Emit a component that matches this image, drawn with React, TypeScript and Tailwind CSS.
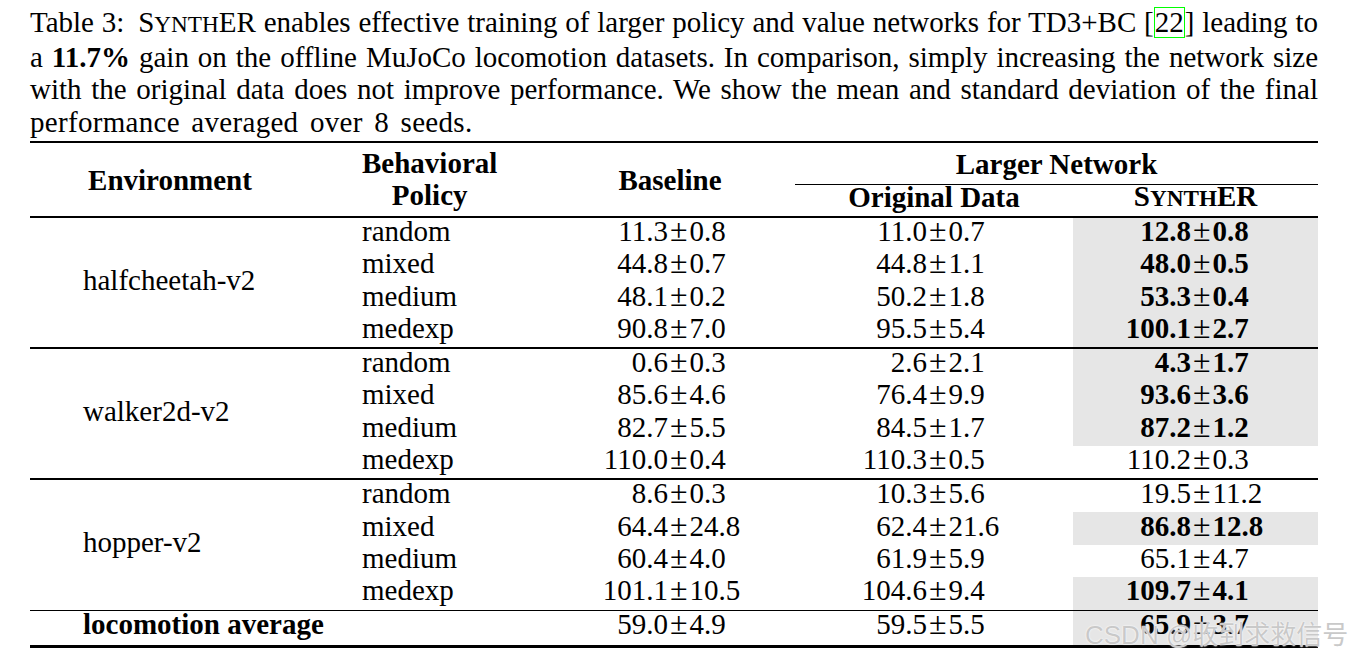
import React from 'react';

type Row = [string, string, string, string, string, string, string, boolean];

const groups: { env: string; rows: Row[] }[] = [
  {
    env: 'halfcheetah-v2',
    rows: [
      ['random', '11.3', '0.8', '11.0', '0.7', '12.8', '0.8', true],
      ['mixed', '44.8', '0.7', '44.8', '1.1', '48.0', '0.5', true],
      ['medium', '48.1', '0.2', '50.2', '1.8', '53.3', '0.4', true],
      ['medexp', '90.8', '7.0', '95.5', '5.4', '100.1', '2.7', true],
    ],
  },
  {
    env: 'walker2d-v2',
    rows: [
      ['random', '0.6', '0.3', '2.6', '2.1', '4.3', '1.7', true],
      ['mixed', '85.6', '4.6', '76.4', '9.9', '93.6', '3.6', true],
      ['medium', '82.7', '5.5', '84.5', '1.7', '87.2', '1.2', true],
      ['medexp', '110.0', '0.4', '110.3', '0.5', '110.2', '0.3', false],
    ],
  },
  {
    env: 'hopper-v2',
    rows: [
      ['random', '8.6', '0.3', '10.3', '5.6', '19.5', '11.2', false],
      ['mixed', '64.4', '24.8', '62.4', '21.6', '86.8', '12.8', true],
      ['medium', '60.4', '4.0', '61.9', '5.9', '65.1', '4.7', false],
      ['medexp', '101.1', '10.5', '104.6', '9.4', '109.7', '4.1', true],
    ],
  },
];

const cols = 'grid grid-cols-[280px_235px_250px_278px_245px]';

const Num = ({ m, s, w, bold }: { m: string; s: string; w: string; bold?: boolean }) => (
  <div className={`flex ${bold ? 'font-bold' : ''}`}>
    <span className={`${w} text-right`}>{m}</span>
    <span className="px-[2px] font-normal text-[1.1em] leading-[32px]">±</span>
    <span>{s}</span>
  </div>
);

const SynthER = ({ bold }: { bold?: boolean }) => (
  <span className={bold ? 'font-bold' : ''}>
    S<span className="text-[0.8em]">YNTH</span>ER
  </span>
);

export default function App() {
  return (
    <div className="bg-white w-[1353px] h-[657px] relative overflow-hidden [font-family:Liberation_Serif,Times_New_Roman,serif] text-black text-[29px]">
      <div className="pl-[30px] w-[1318px] pt-[6px]">
        {/* Caption */}
        <div className="leading-[32.7px]">
          <div className="text-justify [text-align-last:justify] whitespace-nowrap">
            Table 3: <span className="ml-[6px]"><SynthER /></span> enables effective training of larger policy and value networks for TD3+BC [<span className="border-[1.5px] border-[#00ff00] leading-none inline-block">22</span>] leading to
          </div>
          <div className="text-justify [text-align-last:justify]">
            a <b>11.7%</b> gain on the offline MuJoCo locomotion datasets. In comparison, simply increasing the network size
          </div>
          <div className="text-justify [text-align-last:justify]">
            with the original data does not improve performance. We show the mean and standard deviation of the final
          </div>
          <div className="[word-spacing:4px] tracking-[0.3px]">performance averaged over 8 seeds.</div>
        </div>

        {/* Table */}
        <div className="mt-[2px] w-[1288px] leading-[32px]">
          <div className="h-[2px] bg-black" />
          <div className={`${cols} grid-rows-[41px_1.5px_31px] font-bold`}>
            <div className="row-span-3 flex items-center justify-center">Environment</div>
            <div className="row-span-3 flex items-center pl-[52px] pb-[2px]">
              <div className="flex flex-col items-center">
                <span>Behavioral</span>
                <span>Policy</span>
              </div>
            </div>
            <div className="row-span-3 flex items-center justify-center">Baseline</div>
            <div className="col-span-2 flex items-end justify-center pb-[4px]">Larger Network</div>
            <div className="col-span-2 bg-black" />
            <div className="flex items-center justify-center pb-[8px]">Original Data</div>
            <div className="flex items-center justify-center pb-[8px]">
              <SynthER />
            </div>
          </div>
          <div className="h-[1.5px] bg-black" />

          {groups.map((g, gi) => (
            <React.Fragment key={g.env}>
              {gi > 0 && <div className="h-[1.5px] bg-black" />}
              <div className={`${cols} grid-rows-[repeat(4,32.4px)]`}>
                <div className="row-span-4 flex items-center pl-[53px] pb-[6px]" style={{ gridRow: '1 / span 4' }}>
                  {g.env}
                </div>
                {g.rows.map((r, ri) => (
                  <React.Fragment key={ri}>
                    <div className="col-start-2 flex items-center pl-[52px] pb-[6px]">{r[0]}</div>
                    <div className="flex items-center pb-[6px]">
                      <Num m={r[1]} s={r[2]} w="w-[123px]" />
                    </div>
                    <div className="flex items-center pb-[6px]">
                      <Num m={r[3]} s={r[4]} w="w-[132px]" />
                    </div>
                    <div className={`flex items-center pb-[6px] ${r[7] ? 'bg-[#e6e6e6]' : ''}`}>
                      <Num m={r[5]} s={r[6]} w="w-[118px]" bold={r[7]} />
                    </div>
                  </React.Fragment>
                ))}
              </div>
            </React.Fragment>
          ))}

          <div className="h-[1.5px] bg-black" />
          <div className={`${cols} grid-rows-[34px]`}>
            <div className="flex items-center pl-[53px] pb-[9px] font-bold whitespace-nowrap">locomotion average</div>
            <div />
            <div className="flex items-center pb-[9px]">
              <Num m="59.0" s="4.9" w="w-[123px]" />
            </div>
            <div className="flex items-center pb-[9px]">
              <Num m="59.5" s="5.5" w="w-[132px]" />
            </div>
            <div className="flex items-center pb-[9px] bg-[#e6e6e6]">
              <Num m="65.9" s="3.7" w="w-[118px]" bold />
            </div>
          </div>
          <div className="h-[2.5px] bg-black" />
        </div>
      </div>

      {/* watermark */}
      <div className="absolute left-[1085px] top-[618px] text-[26px] leading-[34px] text-[#c9c9c9] [font-family:Liberation_Sans,Noto_Sans_CJK_SC,sans-serif] [text-shadow:0_0_2px_#ffffff,0_0_1px_#ffffff] whitespace-nowrap">
        CSDN @收到求救信号
      </div>
    </div>
  );
}
